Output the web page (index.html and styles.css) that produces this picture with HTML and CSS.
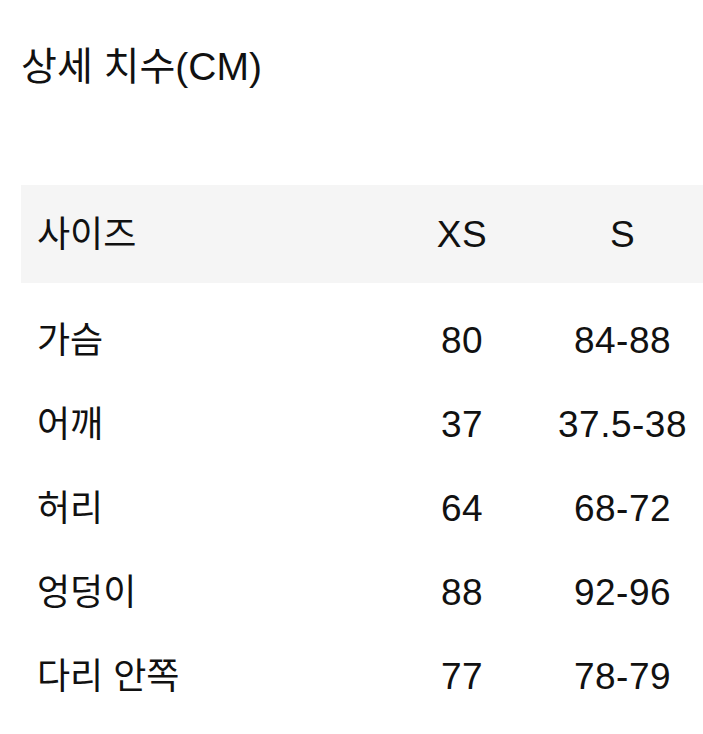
FILE: index.html
```html
<!DOCTYPE html>
<html lang="ko">
<head>
<meta charset="utf-8">
<title>상세 치수(CM)</title>
<link rel="stylesheet" href="styles.css">
</head>
<body>
<main class="page">
  <h1 class="title">상세 치수(CM)</h1>
  <div class="table">
    <div class="row head">
      <div class="cell label">사이즈</div>
      <div class="cell val">XS</div>
      <div class="cell val">S</div>
    </div>
    <div class="body">
      <div class="row">
        <div class="cell label">가슴</div>
        <div class="cell val">80</div>
        <div class="cell val">84-88</div>
      </div>
      <div class="row">
        <div class="cell label">어깨</div>
        <div class="cell val">37</div>
        <div class="cell val">37.5-38</div>
      </div>
      <div class="row">
        <div class="cell label">허리</div>
        <div class="cell val">64</div>
        <div class="cell val">68-72</div>
      </div>
      <div class="row">
        <div class="cell label">엉덩이</div>
        <div class="cell val">88</div>
        <div class="cell val">92-96</div>
      </div>
      <div class="row">
        <div class="cell label">다리 안쪽</div>
        <div class="cell val">77</div>
        <div class="cell val">78-79</div>
      </div>
    </div>
  </div>
</main>
</body>
</html>
```

FILE: styles.css
```css
html, body {
  margin: 0;
  padding: 0;
  background: #ffffff;
}

body {
  font-family: "Liberation Sans", "Noto Sans CJK KR", sans-serif;
  color: #111111;
  overflow: hidden;
}

.page {
  padding: 45px 0 0 21px;
}

.title {
  margin: 0;
  font-size: 39px;
  font-weight: 400;
  line-height: 43px;
}

.table {
  margin-top: 97px;
  width: 682px;
}

.row {
  display: grid;
  grid-template-columns: 361px 160px 161px;
  height: 84px;
  align-items: center;
  font-size: 36px;
  line-height: 43px;
}

.row.head {
  height: 98px;
  background: #f5f5f5;
}

.body {
  padding-top: 15px;
}

.cell.label {
  padding-left: 16px;
}

.cell.val {
  text-align: center;
  font-size: 37px;
  letter-spacing: 0.5px;
}
```
